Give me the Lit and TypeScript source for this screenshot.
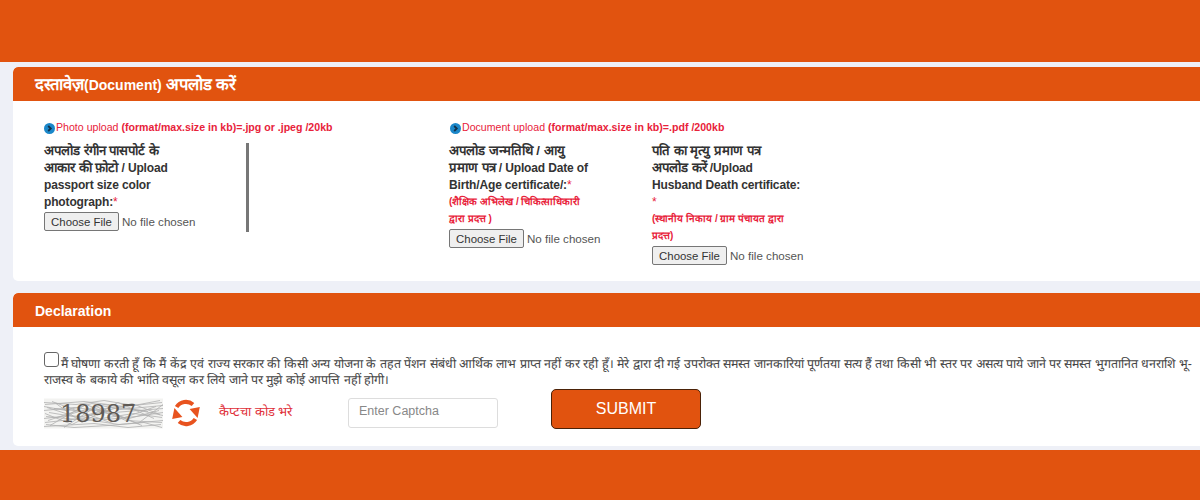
import { LitElement, html, css, svg } from "lit";
import { customElement } from "lit/decorators.js";

const noise = [
  "M1 6 L40 3 L80 8 L118 4", "M0 12 L30 9 L70 14 L119 10", "M2 18 L44 22 L90 15 L118 19",
  "M1 24 L36 20 L75 26 L119 22", "M0 28 L50 25 L84 29 L117 26", "M3 9 L25 16 L60 6 L104 13",
  "M4 22 L34 12 L66 24 L112 8", "M8 3 L46 17 L88 5 L116 16", "M6 27 L42 6 L82 22 L118 24",
  "M1 15 L28 26 L58 11 L98 27", "M12 5 L38 24 L74 4 L110 20", "M20 29 L52 8 L94 25 L119 6",
  "M0 8 L22 12 L48 5 L76 11 L119 7", "M0 20 L26 17 L62 21 L92 18 L119 14", "M2 26 L30 29 L64 27 L100 24 L118 29",
  "M5 14 L35 19 L55 13 L85 20 L115 12", "M10 10 L40 13 L68 9 L96 12 L119 17", "M0 4 L32 6 L60 2 L90 7 L116 2",
];

@customElement("app-root")
export class AppRoot extends LitElement {
  static styles = css`
    :host { display: block; width: 1200px; height: 500px; overflow: hidden; background: #eef0f7; font-family: "Liberation Sans", Arial, sans-serif; }
    .page { display: flex; flex-direction: column; height: 500px; }
    .top { height: 62px; background: #e1530f; flex: none; }
    .bottom { height: 50px; background: #e1530f; flex: none; margin-top: 4px; }
    .card { margin-left: 13px; background: #fff; border-radius: 5px 0 0 5px; overflow: hidden; flex: none; }
    .docs { margin-top: 5px; height: 214px; }
    .decl { margin-top: 12px; height: 153px; }
    .head { height: 34px; background: #e1530f; color: #fff; font-weight: 700; font-size: 14px; line-height: 36px; padding-left: 22px; border-radius: 5px 0 0 0; }
    .head .big { font-size: 16.6px; line-height: 0; }
    .docs-body { display: flex; padding: 20px 0 0 31px; }
    .left { width: 406px; flex: none; }
    .note { display: flex; align-items: center; gap: 1px; height: 13px; font-size: 10.6px; line-height: 13px; color: #e8223a; white-space: nowrap; }
    .note b { font-weight: 700; margin-left: 3px; }
    .note svg { display: block; width: 11px; height: 11px; margin-top: 2px; }
    .fields { display: flex; margin-top: 9px; }
    .field { font-size: 12px; letter-spacing: -0.15px; line-height: 17px; font-weight: 700; color: #333; }
    .hi { font-size: 13.2px; letter-spacing: 0; line-height: 0; }
    .f1 { width: 202px; height: 89px; border-right: 3px solid #777; }
    .f1 .w { width: 140px; }
    .f1 .file { margin-top: 1px; }
    .f2 { width: 203px; margin-left: -1px; }
    .f2 .w { width: 145px; }
    .f3 .w { width: 152px; }
    .star { color: #e8223a; font-weight: 400; }
    .sub { display: block; color: #e8223a; font-size: 10px; letter-spacing: 0; line-height: 17px; margin-top: -1px; }
    .f3 .sub { width: 146px; }
    .sub .hi { font-size: inherit; }
    .file { display: flex; align-items: center; gap: 3px; margin-top: 2px; letter-spacing: 0; font: 400 11.6px/17px "Liberation Sans", Arial, sans-serif; color: #555; }
    .choose { height: 19px; width: 75px; box-sizing: border-box; border: 1px solid #767676; border-radius: 2px; background: #efefef; color: #333; font: 400 11.4px "Liberation Sans", Arial, sans-serif; padding: 0; }
    .decl-body { padding: 27px 0 0 31px; }
    .text { font-size: 12.4px; line-height: 16px; color: #444; width: 1150px; }
    .text span.t { line-height: 0; }
    .check { display: inline-block; vertical-align: -1px; width: 13px; height: 13px; border: 1px solid #666; border-radius: 3px; background: #fff; margin: -2px 2px 2px 0; }
    .row { display: flex; align-items: flex-end; margin-top: 1px; }
    .captcha { width: 119px; height: 31px; position: relative; flex: none; display: flex; align-items: center; padding-left: 16px; box-sizing: border-box; overflow: hidden; }
    .captcha svg { position: absolute; inset: 0; }
    .captcha span { position: relative; font: 400 24px "DejaVu Serif", serif; color: #5f5a55; }
    .refresh { width: 28px; height: 28px; margin: 0 0 2px 9px; flex: none; }
    .hint { margin: 0 0 9px 19px; width: 129px; flex: none; font-size: 13px; color: #e0303a; }
    .input { width: 150px; height: 30px; margin-bottom: 1px; box-sizing: border-box; border: 1px solid #ddd; border-radius: 3px; padding: 0 10px; font: 12.5px "Liberation Sans", Arial, sans-serif; color: #888; background: #fff; line-height: 25px; flex: none; }
    .submit { width: 150px; height: 40px; box-sizing: border-box; margin: 0 0 0 53px; background: #e1530f; border: 1px solid #4a2208; border-radius: 5px; color: #fff; font: 400 16px "Liberation Sans", Arial, sans-serif; padding: 0; }
  `;

  private note(label: string, rest: string) {
    return html`<div class="note">
      <svg viewBox="0 0 11 11"><circle cx="5.5" cy="5.5" r="5.5" fill="#1b87c9"/><path d="M4.2 3 L6.8 5.5 L4.2 8" fill="none" stroke="#12324a" stroke-width="1.8"/></svg>
      <span>${label}<b>${rest}</b></span>
    </div>`;
  }

  private file() {
    return html`<div class="file"><button class="choose">Choose File</button><span>No file chosen</span></div>`;
  }

  render() {
    return html`<div class="page">
      <div class="top"></div>
      <section class="card docs">
        <div class="head"><span class="big">दस्तावेज़</span>(Document) <span class="big">अपलोड करें</span></div>
        <div class="docs-body">
          <div class="left">
            ${this.note("Photo upload", "(format/max.size in kb)=.jpg or .jpeg /20kb")}
            <div class="fields">
              <div class="field f1">
                <div class="w"><span class="hi">अपलोड रंगीन पासपोर्ट के आकार की फ़ोटो</span> / Upload passport size color photograph:<span class="star">*</span></div>
                ${this.file()}
              </div>
            </div>
          </div>
          <div class="right">
            ${this.note("Document upload", "(format/max.size in kb)=.pdf /200kb")}
            <div class="fields">
              <div class="field f2">
                <div class="w"><span class="hi">अपलोड जन्मतिथि / आयु प्रमाण पत्र</span> / Upload Date of Birth/Age certificate/:<span class="star">*</span>
                  <span class="sub"><span class="hi">(शैक्षिक अभिलेख / चिकित्साधिकारी द्वारा प्रदत्त )</span></span></div>
                ${this.file()}
              </div>
              <div class="field f3">
                <div class="w"><span class="hi">पति का मृत्यु प्रमाण पत्र<br />अपलोड करें</span> /Upload<br />Husband Death certificate:<br /><span class="star">*</span>
                  <span class="sub"><span class="hi">(स्थानीय निकाय / ग्राम पंचायत द्वारा प्रदत्त)</span></span></div>
                ${this.file()}
              </div>
            </div>
          </div>
        </div>
      </section>
      <section class="card decl">
        <div class="head">Declaration</div>
        <div class="decl-body">
          <div class="text"><span class="check"></span><span class="t">मैं घोषणा करती हूँ कि मैं केंद्र एवं राज्य सरकार की किसी अन्य योजना के तहत पेंशन संबंधी आर्थिक लाभ प्राप्त नहीं कर रही हूँ। मेरे द्वारा दी गई उपरोक्त समस्त जानकारियां पूर्णतया सत्य हैं तथा किसी भी स्तर पर असत्य पाये जाने पर समस्त भुगतानित धनराशि भू-राजस्व के बकाये की भांति वसूल कर लिये जाने पर मुझे कोई आपत्ति नहीं होगी।</span></div>
          <div class="row">
            <div class="captcha">
              <svg width="119" height="31" viewBox="0 0 119 30"><rect width="119" height="30" fill="#f3f3f1"/>
                ${noise.map((d) => svg`<path d=${d} fill="none" stroke="#b0b0b0" stroke-width="0.8"/>`)}
              </svg>
              <span>18987</span>
            </div>
            <svg class="refresh" viewBox="0 0 28 28">
              <g>
                <path d="M4.6 8 A11 11 0 0 1 21 5.5" fill="none" stroke="#e8531f" stroke-width="4"/>
                <path d="M17.6 10 L27.8 8 L25.6 19 Z" fill="#e8531f"/>
              </g>
              <g transform="rotate(180 14 14)">
                <path d="M4.6 8 A11 11 0 0 1 21 5.5" fill="none" stroke="#e8531f" stroke-width="4"/>
                <path d="M17.6 10 L27.8 8 L25.6 19 Z" fill="#e8531f"/>
              </g>
            </svg>
            <div class="hint">कैप्टचा कोड भरे</div>
            <div class="input">Enter Captcha</div>
            <button class="submit">SUBMIT</button>
          </div>
        </div>
      </section>
      <div class="bottom"></div>
    </div>`;
  }
}
